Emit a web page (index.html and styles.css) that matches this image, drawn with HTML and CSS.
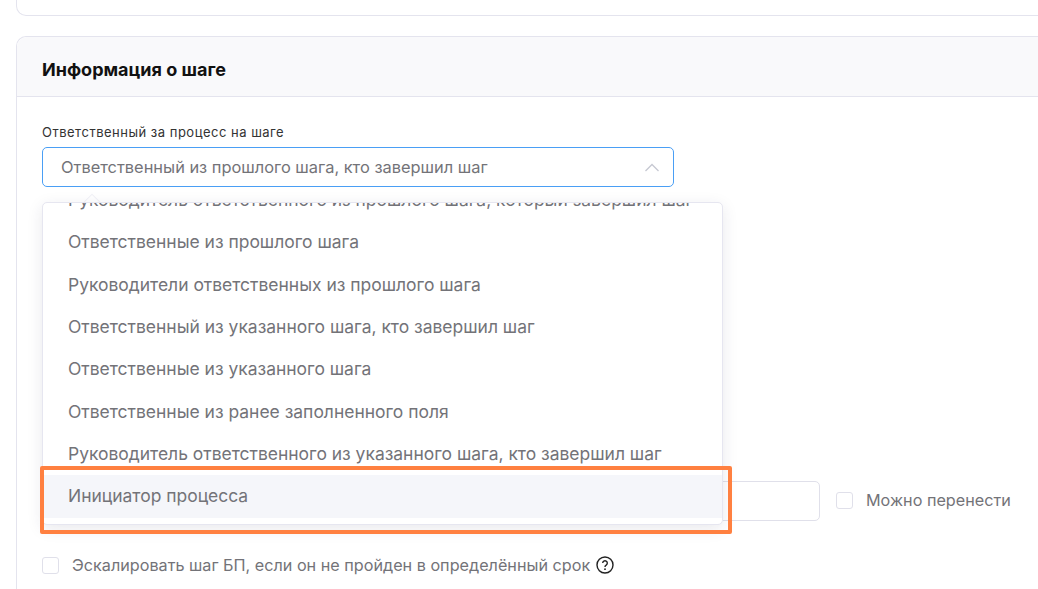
FILE: index.html
```html
<!DOCTYPE html>
<html lang="ru">
<head>
<meta charset="utf-8">
<title>Информация о шаге</title>
<link rel="stylesheet" href="styles.css">
</head>
<body>
<div class="page">
  <div class="card-top"></div>
  <section class="card">
    <header class="card-head"><h2>Информация о шаге</h2></header>
    <div class="card-body">
      <div class="label">Ответственный за процесс на шаге</div>
      <div class="select-wrap">
        <div class="select">
          <span>Ответственный из прошлого шага, кто завершил шаг</span>
          <svg class="chev" width="16" height="9" viewBox="0 0 16 9"><path d="M1.5 8 8 1.5 14.500 8" fill="none" stroke="#c6c8d2" stroke-width="1.300"/></svg>
        </div>
        <div class="arrow"></div>
        <div class="dropdown">
          <ul class="list">
            <li>Руководитель ответственного из прошлого шага, который завершил шаг</li>
            <li>Ответственные из прошлого шага</li>
            <li>Руководители ответственных из прошлого шага</li>
            <li>Ответственный из указанного шага, кто завершил шаг</li>
            <li>Ответственные из указанного шага</li>
            <li>Ответственные из ранее заполненного поля</li>
            <li>Руководитель ответственного из указанного шага, кто завершил шаг</li>
            <li class="hover">Инициатор процесса</li>
          </ul>
        </div>
      </div>
      <div class="row-input">
        <div class="input"></div>
        <label class="check"><span class="box"></span><span class="check-text">Можно перенести</span></label>
      </div>
      <label class="check check-esc"><span class="box"></span><span class="check-text">Эскалировать шаг БП, если он не пройден в определённый срок</span>
        <svg class="help" width="18" height="18" viewBox="0 0 18 18"><circle cx="9" cy="9" r="8" fill="none" stroke="#222" stroke-width="1.400"/><path d="M6.700 7.100a2.300 2.300 0 1 1 3.500 2c-.8.500-1.200.9-1.200 1.800" fill="none" stroke="#222" stroke-width="1.400"/><circle cx="9" cy="13.200" r=".9" fill="#222"/></svg>
      </label>
      <div class="callout"></div>
    </div>
  </section>
</div>
</body>
</html>
```
FILE: styles.css
```css
* { box-sizing: border-box; }
html, body { margin: 0; height: 589px; overflow: hidden; background: #fff; }
body { font-family: "Inter", "Noto Sans", sans-serif; color: #737378; }
.page { width: 1038px; height: 589px; padding-left: 16px; overflow: hidden; }
.card-top {
  height: 16px; margin-top: 0;
  border: 1px solid #e4e4ee; border-top: 0;
  border-right: 0; border-radius: 0 0 0 10px;
}
.card {
  margin-top: 20px; height: 600px;
  border: 1px solid #e4e4ee; border-right: 0;
  border-radius: 10px 0 0 0;
}
.card-head {
  height: 60px; background: #f9f9fb;
  border-bottom: 1px solid #e4e4ee;
  border-radius: 10px 0 0 0;
  display: flex; align-items: center; padding: 7px 0 0 25px;
}
.card-head h2 { margin: 0; font-size: 18px; line-height: 20px; font-weight: 700; color: #111; }
.card-body { position: relative; padding: 27px 0 0 25px; }
.label { font-size: 13px; letter-spacing: .5px; line-height: 16px; color: #333; margin-bottom: 7px; }
.select-wrap { position: relative; width: 632px; }
.select {
  height: 40px; border: 1px solid #4a9ff5; border-radius: 5px; background: #fff;
  display: flex; align-items: center; justify-content: space-between;
  padding: 0 13px 0 18px; font-size: 16.4px;
}
.arrow {
  position: absolute; left: 44px; top: 49px; width: 12px; height: 12px;
  background: #fff; transform: rotate(45deg); border: 1px solid #f2f2f7; z-index: 2;
}
.dropdown {
  position: absolute; left: 0; top: 55px; width: 681px; height: 323px; z-index: 3;
  background: #fff; border: 1px solid #e6e6f0; border-radius: 5px;
  box-shadow: 0 4px 16px rgba(40, 40, 80, .1); overflow: hidden;
}
.list { list-style: none; margin: -24px 0 0; padding: 0 0 0 1px; }
.list li {
  height: 42.35px; line-height: 42.35px; padding-left: 24px;
  font-size: 17.47px; white-space: nowrap; color: #737378;
}
.list .hover { background: #f5f6fa; }
.row-input { display: flex; align-items: center; margin-top: 294px; }
.input { width: 778px; height: 40px; border: 1px solid #e0e0ea; border-radius: 5px; background: #fff; }
.check { display: flex; align-items: center; }
.row-input .check { margin-left: 16px; position: relative; top: -1px; }
.box { width: 17px; height: 17px; border: 1px solid #e0e0ea; border-radius: 3px; background: #fff; flex: none; }
.check-text { margin-left: 13px; font-size: 16.2px; color: #737378; white-space: nowrap; }
.check-esc { margin-top: 34px; }
.help { margin-left: 6px; }
.callout {
  position: absolute; left: 23px; top: 369px; width: 692px; height: 68px;
  border: 4px solid #ff8040; border-radius: 2px; z-index: 4; pointer-events: none;
}
```
